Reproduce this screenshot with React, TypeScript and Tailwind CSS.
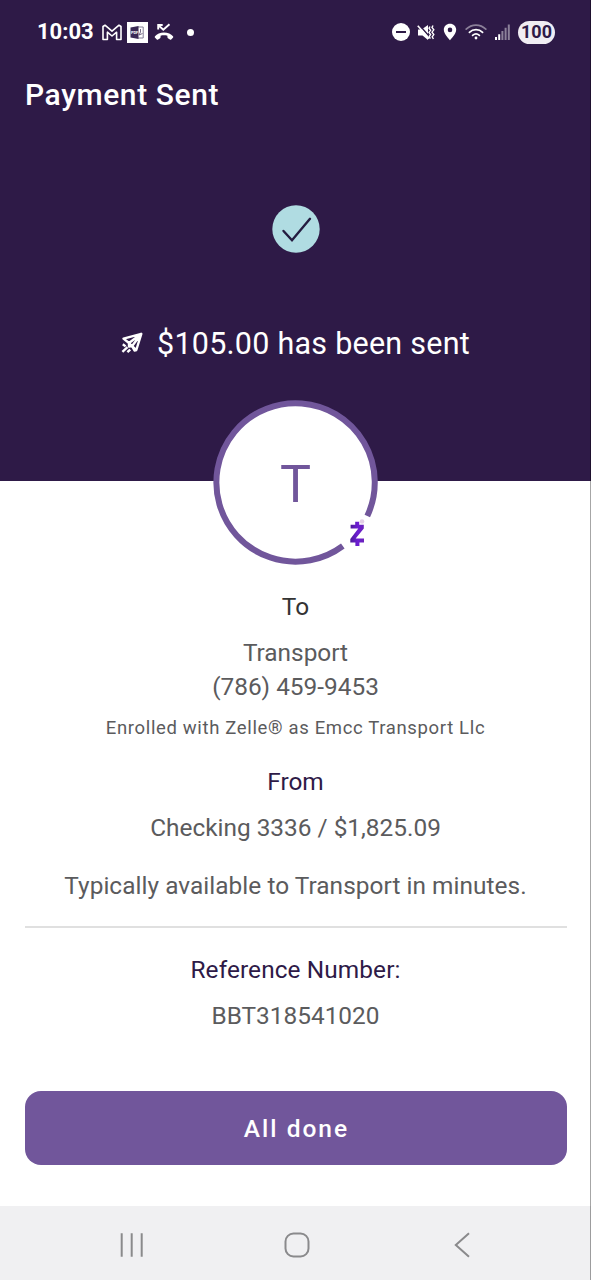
import type { ReactNode } from "react";

function StatusBar() {
  return (
    <div className="flex h-16 items-center pl-[37px] pr-[36px] text-white">
      <span className="w-[65px] text-[22px] font-bold leading-none">10:03</span>

      {/* Gmail */}
      <svg className="h-[17px] w-5" viewBox="0 0 20 17" fill="none" stroke="currentColor" strokeWidth="1.6" strokeLinejoin="round">
        <path d="M1 15.5V2.5L3 1.2L10 7.2L17 1.2L19 2.5V15.5H14.6V8.2L10 12L5.4 8.2V15.5Z" />
      </svg>

      {/* PDF reader */}
      <div className="ml-[5px] flex h-[21px] w-[21px] items-center justify-center bg-white">
        <svg className="h-[15px] w-[15px]" viewBox="0 0 15 15">
          <path d="M8 2H13.2V13H8" fill="none" stroke="#77708a" strokeWidth="0.9" />
          <path d="M10.5 4V7L9 10L12.5 8.5" fill="none" stroke="#55486a" strokeWidth="0.8" />
          <path d="M0.5 2.5L8.5 1V14L0.5 12.5Z" fill="#3a2955" />
          <text x="0.9" y="9" fill="#fff" fontSize="4" fontWeight="700">PDF</text>
        </svg>
      </div>

      {/* Missed call */}
      <svg className="ml-[6px] h-[18px] w-5" viewBox="0 0 20 18" fill="none" stroke="currentColor">
        <path d="M4.2 6.5V2H8.7M4.4 2.2L9.3 6.8L15.5 1.2" strokeWidth="1.9" />
        <path
          d="M10 9.4C6.2 9.4 2.9 10.9 1 13.2C.6 13.7.7 14.3 1.1 14.7L2.8 16.6C3.2 17 3.7 16.9 4.1 16.6L6.1 15.2C6.5 14.9 6.6 14.5 6.6 14.1V12.8C8.8 12.2 11.2 12.2 13.4 12.8V14.1C13.4 14.5 13.5 14.9 13.9 15.2L15.9 16.6C16.3 16.9 16.8 17 17.2 16.6L18.9 14.7C19.3 14.3 19.4 13.7 19 13.2C17.1 10.9 13.8 9.4 10 9.4Z"
          fill="currentColor"
          stroke="none"
        />
      </svg>
      <span className="ml-[13px] h-[7px] w-[7px] rounded-full bg-white" />

      {/* Do not disturb */}
      <span className="ml-auto flex h-[18px] w-[18px] items-center justify-center rounded-full bg-white">
        <span className="h-[2px] w-[10px] bg-[#2e1a47]" />
      </span>

      {/* Muted, vibrate */}
      <svg className="ml-[7px] h-[17px] w-[18px]" viewBox="0 0 18 17" fill="none" stroke="currentColor">
        <path d="M1 5.5H4.5L11 1V16L5.5 11.5H1Z" fill="currentColor" stroke="none" />
        <path d="M1.8 0.6L13 13.2" stroke="#2e1a47" strokeWidth="1.5" />
        <path d="M0.8 1.8L12 14.6" strokeWidth="1.6" />
        <path d="M13 2.5L12 4.2L13.6 6.3L12 8.4L13.6 10.6L12.2 12.6L13.4 14.6M16 1.5L15 3.5L16.8 5.8L15 8.2L16.8 10.6L15.2 12.8L16.4 15" strokeWidth="1.4" />
      </svg>

      {/* Location */}
      <svg className="ml-[8px] h-[18px] w-[14px]" viewBox="0 0 14 18">
        <path
          d="M7 0.8C3.5 0.8 .8 3.4 .8 6.8C.8 11 7 17.2 7 17.2S13.2 11 13.2 6.8C13.2 3.4 10.5 .8 7 .8ZM7 4.6A2.3 2.3 0 1 1 7 9.2A2.3 2.3 0 1 1 7 4.6Z"
          fill="currentColor"
        />
      </svg>

      {/* Wi-Fi */}
      <svg className="ml-[8px] h-[16px] w-[22px]" viewBox="0 0 22 16" fill="none" stroke="currentColor" strokeWidth="1.7" strokeLinecap="round">
        <path d="M1.2 5.2C6.7 -.3 15.3 -.3 20.8 5.2" opacity="0.45" />
        <path d="M4.4 8.3C8.1 4.7 13.9 4.7 17.6 8.3M7.6 11.4C9.6 9.6 12.4 9.6 14.4 11.4" />
        <circle cx="11" cy="14" r="1.4" fill="currentColor" stroke="none" />
      </svg>

      {/* Signal */}
      <svg className="ml-[8px] h-[16px] w-[15px]" viewBox="0 0 15 16" fill="currentColor">
        <path d="M0 13H2V16H0ZM3.2 10.2H5.2V16H3.2Z" />
        <path d="M6.4 7H8.4V16H6.4ZM9.6 3.7H11.6V16H9.6ZM12.8 .5H14.8V16H12.8Z" opacity="0.45" />
      </svg>

      <span className="ml-[8px] flex h-[23px] w-[37px] items-center justify-center rounded-full bg-[#f0edf3] text-[18px] font-bold leading-none text-[#2e1a47]">
        100
      </span>
    </div>
  );
}

function Avatar() {
  return (
    <div className="relative -mt-[81px] flex h-[165px] w-[165px] items-center justify-center rounded-full">
      <svg className="absolute inset-0 h-full w-full" viewBox="0 0 165 165" fill="none">
        <defs>
          <linearGradient id="zelle" x1="0" y1="0" x2="1" y2="0">
            <stop offset="0" stopColor="#4d1a99" />
            <stop offset="0.55" stopColor="#6d1ed4" />
            <stop offset="1" stopColor="#6a22b8" />
          </linearGradient>
        </defs>
        <circle cx="82.5" cy="82.5" r="80.5" fill="#fff" />
        <path d="M129.8 146A79.2 79.2 0 1 1 154.3 116" stroke="#71569b" strokeWidth="6" />
        <circle cx="149" cy="121.5" r="2.3" fill="#e3cfe6" />
        <path
          d="M142.2 121.7H146.2V124.7H150.8V128.4L142.7 138.6H151V142.5H146.4V145.9H142.4V142.5H137.3V138.9L145.3 128.6H137.6V124.7H142.2Z"
          fill="url(#zelle)"
        />
      </svg>
      <span className="relative pt-[4px] text-[52px] leading-none text-[#71569b]">T</span>
    </div>
  );
}

function Line({ className, children }: { className: string; children: ReactNode }) {
  return <p className={`text-center text-[24.4px] leading-[34px] whitespace-nowrap ${className}`}>{children}</p>;
}

function NavBar() {
  return (
    <nav className="flex h-[74px] items-center bg-[#f0f0f2] pb-[1px] pl-[119px] text-[#8a8a8c]">
      <svg className="mt-[5px] h-[26px] w-[26px]" viewBox="0 0 26 26" stroke="currentColor" strokeWidth="2">
        <path d="M2.7 1.2V24.8M12.7 1.2V24.8M22.7 1.2V24.8" />
      </svg>
      <svg className="ml-[139px] mt-[5px] h-[26px] w-[26px]" viewBox="0 0 26 26" fill="none" stroke="currentColor" strokeWidth="2">
        <rect x="1.5" y="1.5" width="23" height="23" rx="8" />
      </svg>
      <svg className="ml-[142px] mt-[5px] h-[26px] w-[20px]" viewBox="0 0 20 26" fill="none" stroke="currentColor" strokeWidth="2">
        <path d="M17 1.2L3.8 13L17 24.8" />
      </svg>
    </nav>
  );
}

export default function App() {
  return (
    <div className="relative flex h-[1280px] w-[591px] flex-col bg-white font-[Roboto,sans-serif]">
      <header className="flex h-[481px] flex-col bg-[#2e1a47] text-white">
        <StatusBar />
        <h1 className="mt-[11px] pl-[25px] text-[30px] font-medium leading-10 tracking-[0.6px]">Payment Sent</h1>

        <div className="mt-[90px] flex justify-center">
          <svg className="h-12 w-12" viewBox="0 0 48 48" fill="none">
            <circle cx="24" cy="24" r="23.7" fill="#b0dce2" />
            <path d="M11.5 26L20 35.3L38 13.8" stroke="#241c40" strokeWidth="2.4" strokeLinecap="round" />
          </svg>
        </div>

        <div className="mt-[71px] flex items-center justify-center">
          {/* Paper plane */}
          <svg className="mr-[14px] mb-[3px] h-[22px] w-[22px]" viewBox="0 0 22 22" fill="none" stroke="currentColor" strokeWidth="2.4" strokeLinejoin="round">
            <path d="M20.3 1.8L2.5 6.6L8 11L15.3 18L20.3 1.8ZM20.3 1.8L8 11V14.5L11.2 14L20.3 1.8" />
            <path d="M11 14L13.5 18.5L15.3 18M1.8 12.2L4.6 14.4M1.4 19.8L6.5 15.2M6.4 20.2L9.2 17.6" strokeWidth="2.4" />
          </svg>
          <p className="text-[30.5px] leading-10 tracking-[0.25px]">$105.00 has been sent</p>
        </div>
      </header>

      <main className="flex flex-col items-center text-[#5b5b5d]">
        <Avatar />
        <Line className="mt-[25px] text-[#333333]">To</Line>
        <Line className="mt-[12px]">Transport</Line>
        <Line className="">(786) 459-9453</Line>
        <p className="mt-[11px] text-[18.5px] leading-[26px] tracking-[0.65px] whitespace-nowrap">
          Enrolled with Zelle® as Emcc Transport Llc
        </p>

        <Line className="mt-[24px] text-[#2e1a47]">From</Line>
        <Line className="mt-[12px]">Checking 3336 / $1,825.09</Line>
        <Line className="mt-[24px] tracking-[0.05px]">Typically available to Transport in minutes.</Line>

        <div className="mt-[23px] h-[2px] w-[542px] bg-[#e0e0e0]" />

        <Line className="mt-[25px] tracking-[0.1px] text-[#2e1a47]">Reference Number:</Line>
        <Line className="mt-[12px]">BBT318541020</Line>

        <button className="mt-[58px] h-[74px] w-[542px] rounded-2xl bg-[#71569b] pt-[3px] pl-[2px] text-[24.5px] font-medium tracking-[2px] text-white">
          All done
        </button>
      </main>

      <div className="mt-auto">
        <NavBar />
      </div>

      {/* Screen edge */}
      <div className="absolute inset-y-0 right-0 w-px bg-black/35" />
    </div>
  );
}
